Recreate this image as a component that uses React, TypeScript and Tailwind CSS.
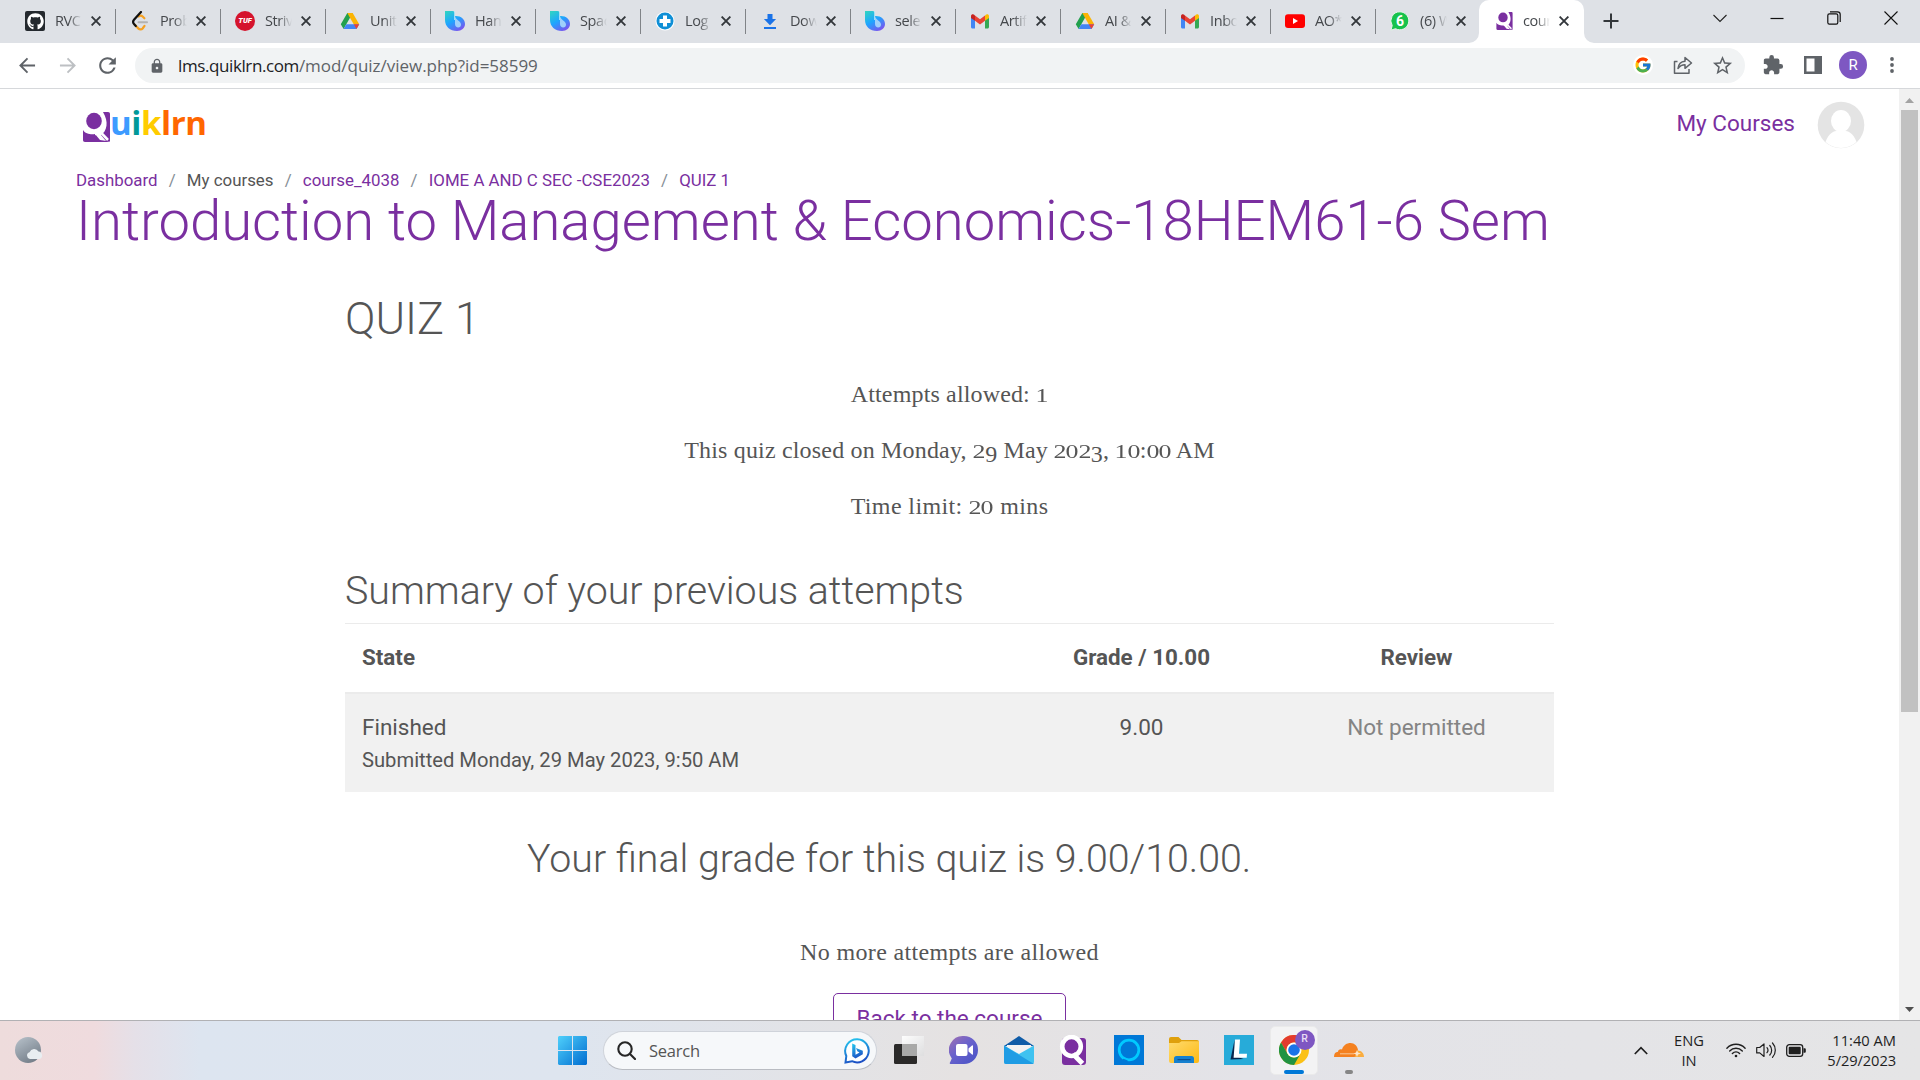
import React from "react";
import { FaGithub } from "react-icons/fa";
import { FcGoogle } from "react-icons/fc";
import { MdExtension, MdLock, MdRefresh, MdStarOutline } from "react-icons/md";

type Svg = { className?: string };

/* ---------- favicons ---------- */

const GithubIcon = () => (
  <span className="flex h-5 w-5 items-center justify-center rounded-[2px] bg-[#24292e] text-white">
    <FaGithub size={17} />
  </span>
);

const LeetcodeIcon = () => (
  <svg viewBox="0 0 20 20" className="h-5 w-5" fill="none" strokeWidth="2.2" strokeLinecap="round">
    <path d="M14.5 14.8 12.6 17.5c-1 1.2-3 1.2-4.1.1L4.6 13.600" stroke="#f5a123" />
    <path d="M14.4 7.300 12.600 5.500c-1-1-2.800-1-3.900 0" stroke="#f5a123" />
    <path d="M11 1 4.200 8.600c-1.300 1.500-1.300 3.400 0 4.700l1.600 1.700" stroke="#111" />
    <path d="M8.500 11.300H17" stroke="#b3b3b3" strokeWidth="2" />
  </svg>
);

const TufIcon = () => (
  <span className="flex h-5 w-5 items-center justify-center rounded-full bg-[#d5142d] font-['Roboto',sans-serif] text-[7.5px] font-black italic leading-none text-white">
    TUF
  </span>
);

const DriveIcon = () => (
  <svg viewBox="0 0 20 20" className="h-5 w-5">
    <path d="M7.300 2h5.400L6.300 13.200 3.600 18 .8 13.200z" fill="#22a04d" />
    <path d="M7.300 2h5.400l6.500 11.200h-5.500z" fill="#fbb404" />
    <path d="M6.400 13.200h12.800L16.500 18h-13z" fill="#4285f4" />
    <path d="m13.700 13.200h5.500L16.500 18z" fill="#ea4335" />
  </svg>
);

const BingChatIcon = () => (
  <svg viewBox="0 0 20 20" className="h-5 w-5">
    <defs>
      <linearGradient id="bc" x1="0.1" y1="0" x2="0.7" y2="1">
        <stop offset="0" stopColor="#2fd3c4" />
        <stop offset="0.5" stopColor="#1ea5ff" />
        <stop offset="1" stopColor="#7a55ee" />
      </linearGradient>
    </defs>
    <path d="M0 0h7.500c1.700 0 2.500.9 2.500 2.500V5c5.500-.5 10 3 10 8 0 4-3.500 7-8 7C5 20 0 15.500 0 9z" fill="url(#bc)" />
    <path d="M10 5v8c0 2 1.500 3.500 3.200 3.500S16 15.200 16 13.500C16 10 10.500 9 10 5z" fill="#9fd0fb" />
    <path d="M9.500 0v9" stroke="#bfe9fa" strokeWidth=".8" />
  </svg>
);

const PlusCircleIcon = () => (
  <svg viewBox="0 0 20 20" className="h-5 w-5">
    <circle cx="10" cy="10" r="9.500" fill="#fff" />
    <circle cx="10" cy="10" r="8.500" fill="#0f8fd6" />
    <path d="M8 4.500h4V8h3.500v4H12v3.500H8V12H4.500V8H8z" fill="#fff" />
  </svg>
);

const DownloadIcon = () => (
  <svg viewBox="0 0 20 20" className="h-5 w-5" fill="#1a73e8">
    <path d="M7.500 3h5v5h3.600L10 14.300 3.900 8h3.600zM4 16h12v2H4z" />
  </svg>
);

const GmailIcon = () => (
  <svg viewBox="0 0 20 20" className="h-5 w-5">
    <path d="M1 6v10c0 .9.600 1.500 1.500 1.500H5V8z" fill="#4285f4" />
    <path d="M19 6v10c0 .9-.6 1.500-1.500 1.500H15V8z" fill="#34a853" />
    <path d="M5 4.500 10 8.300l5-3.800v5.300L10 13.600 5 9.800z" fill="#ea4335" />
    <path d="M1 5.200C1 3.200 3.200 2.800 4.500 3.900L5 4.500v5.300L1 6.900z" fill="#c5221f" />
    <path d="M19 5.200c0-2-2.200-2.400-3.500-1.300l-.5.600v5.300l4-2.900z" fill="#fbbc04" />
  </svg>
);

const YoutubeIcon = () => (
  <svg viewBox="0 0 20 20" className="h-5 w-5">
    <rect x="0" y="3.300" width="20" height="13.600" rx="3" fill="#f00" />
    <path d="M8 7v6l5-3z" fill="#fff" />
  </svg>
);

const WhatsappIcon = () => (
  <span className="relative flex h-5 w-5 items-center justify-center">
    <svg viewBox="0 0 20 20" className="absolute inset-0 h-5 w-5">
      <path d="M10 .8a9 9 0 1 1-4.500 16.900L1 19.200l1.200-4.700A9 9 0 0 1 10 .8z" fill="#17c24b" stroke="#e9f5ec" strokeWidth="1" />
    </svg>
    <span className="relative font-['Roboto',sans-serif] text-[14px] font-bold leading-none text-white">6</span>
  </span>
);

const QLogo = ({ className }: Svg) => (
  <svg viewBox="0 0 27 30" className={className}>
    <path d="M0 18c2 4 9 5 12 4l5 6 10 1.500V30H2c-1.300 0-2-.8-2-2z" fill="#7a2fa0" />
    <path d="M20 0h5c1.400 0 2 .7 2 2v27h-4l-5-6c6-4 8-13 2-23z" fill="#7a2fa0" />
    <ellipse cx="11" cy="9" rx="7.800" ry="8.200" fill="#7a2fa0" />
    <path d="M12 22c2.500 0 4-1 5.500-1.800L25 28" stroke="#fff" strokeWidth="2.600" fill="none" />
  </svg>
);

/* ---------- browser chrome ---------- */

const CloseX = () => (
  <svg viewBox="0 0 10 10" className="h-[10px] w-[10px] shrink-0" stroke="#33373b" strokeWidth="1.900">
    <path d="M.6.600l8.800 8.800M9.400.600.600 9.400" />
  </svg>
);

const tabs: { icon: React.ReactNode; label: string }[] = [
  { icon: <GithubIcon />, label: "RVC" },
  { icon: <LeetcodeIcon />, label: "Prob" },
  { icon: <TufIcon />, label: "Striv" },
  { icon: <DriveIcon />, label: "Unit" },
  { icon: <BingChatIcon />, label: "Han" },
  { icon: <BingChatIcon />, label: "Spac" },
  { icon: <PlusCircleIcon />, label: "Log" },
  { icon: <DownloadIcon />, label: "Dow" },
  { icon: <BingChatIcon />, label: "sele" },
  { icon: <GmailIcon />, label: "Artif" },
  { icon: <DriveIcon />, label: "AI &" },
  { icon: <GmailIcon />, label: "Inbo" },
  { icon: <YoutubeIcon />, label: "AO*" },
  { icon: <WhatsappIcon />, label: "(6) W" },
];

const TabLabel = ({ children }: { children: React.ReactNode }) => (
  <span className="ml-[10px] w-[27px] overflow-hidden whitespace-nowrap text-[14.500px] leading-5 tracking-[-0.4px] text-[#45484c] [mask-image:linear-gradient(to_right,#000_50%,transparent)]">
    {children}
  </span>
);

const TabStrip = () => (
  <div className="flex h-[43px] bg-[#dee1e6] pl-[11px]">
    {tabs.map((t, i) => (
      <div key={i} className="flex h-[42px] w-[105px] shrink-0 items-center">
        <div className="flex h-[25px] w-full items-center pl-[14px]">
          {t.icon}
          <TabLabel>{t.label}</TabLabel>
          <span className="ml-[9px] flex">
            <CloseX />
          </span>
          {i < tabs.length - 1 && <span className="ml-auto h-[25px] w-px bg-[#808387]" />}
        </div>
      </div>
    ))}
    <div className="relative -ml-[2px] flex h-[43px] w-[105px] shrink-0 items-center rounded-t-[10px] bg-white pb-px pl-[17px]">
      <svg viewBox="0 0 10 10" className="absolute -left-[10px] bottom-0 h-[10px] w-[10px]" fill="#fff">
        <path d="M10 0v10H0A10 10 0 0 0 10 0z" />
      </svg>
      <svg viewBox="0 0 10 10" className="absolute -right-[10px] bottom-0 h-[10px] w-[10px]" fill="#fff">
        <path d="M0 0v10h10A10 10 0 0 1 0 0z" />
      </svg>
      <QLogo className="h-[18px] w-[17px]" />
      <TabLabel>cour</TabLabel>
      <span className="ml-[9px] flex">
        <CloseX />
      </span>
    </div>
    <div className="ml-[19px] flex items-center pb-px">
      <svg viewBox="0 0 16 16" className="h-4 w-4" stroke="#33373b" strokeWidth="2">
        <path d="M8 .5v15M.5 8h15" />
      </svg>
    </div>
    <div className="ml-auto flex h-[36px] items-center gap-[43px] pr-[22px]">
      <svg viewBox="0 0 14 14" className="h-[14px] w-[14px]" fill="none" stroke="#222" strokeWidth="1.100">
        <path d="m.5 4 6.500 6.500L13.500 4" />
      </svg>
      <svg viewBox="0 0 14 14" className="h-[14px] w-[14px]" stroke="#111" strokeWidth="1.200">
        <path d="M.5 7.500h13" />
      </svg>
      <svg viewBox="0 0 14 14" className="h-[14px] w-[14px]" fill="none" stroke="#111" strokeWidth="1.200">
        <rect x=".8" y="2.800" width="10" height="10.400" rx="1.600" />
        <path d="M3 .8h7.500a2.700 2.700 0 0 1 2.700 2.700V11" />
      </svg>
      <svg viewBox="0 0 14 14" className="h-[14px] w-[14px]" stroke="#111" strokeWidth="1.100">
        <path d="m.5.500 13 13M13.500.500l-13 13" />
      </svg>
    </div>
  </div>
);

const Arrow = ({ className }: Svg) => (
  <svg viewBox="0 0 18 18" className={className} fill="none" stroke="currentColor" strokeWidth="2">
    <path d="M17 9H2.500M9 1.500 1.500 9 9 16.500" />
  </svg>
);

const Toolbar = () => (
  <div className="flex h-[46px] items-center border-b border-[#d6d8db] bg-white pb-px text-[#5f6368]">
    <Arrow className="ml-[19px] h-[17px] w-[17px]" />
    <Arrow className="ml-[23px] h-[17px] w-[17px] rotate-180 text-[#bdc0c3]" />
    <MdRefresh className="ml-[19px]" size={25} />
    <div className="ml-[15px] flex h-[35px] w-[1610px] items-center rounded-full bg-[#f1f3f4] pl-[14px]">
      <MdLock className="mt-px" size={16} />
      <div className="ml-[13px] mt-px whitespace-nowrap text-[17px] leading-6">
        <span className="tracking-[-0.4px] text-[#202124]">lms.quiklrn.com</span>
        <span className="tracking-[-0.030px]">/mod/quiz/view.php?id=58599</span>
      </div>
      <div className="ml-auto flex items-center">
        <span className="flex h-5 w-5 items-center justify-center rounded-full bg-white">
          <FcGoogle size={18} />
        </span>
        <svg viewBox="0 0 20 20" className="ml-[20px] h-5 w-5" fill="none" stroke="#5f6368" strokeWidth="1.500" strokeLinejoin="round">
          <path d="M4.500 6.500H1.500v11.700h14.500V14" />
          <path d="M5 13.500c.5-4.500 3-7 7-7.300V2.500L18.500 8 12 13.300V9.800c-3 0-5 1-7 3.700z" />
        </svg>
        <MdStarOutline className="ml-[18px] mr-[11px]" size={23} />
      </div>
    </div>
    <MdExtension className="ml-[17px]" size={22} />
    <svg viewBox="0 0 18 18" className="ml-[20px] h-[18px] w-[18px]">
      <path d="M0 0h18v18H0zM2.500 2.500v13h8v-13z" fill="#5f6368" fillRule="evenodd" />
    </svg>
    <span className="ml-[17px] flex h-[28px] w-[28px] items-center justify-center rounded-full bg-[#7e57c2] font-['Roboto',sans-serif] text-[15px] leading-none text-white">
      R
    </span>
    <svg viewBox="0 0 4 18" className="ml-[23px] h-[18px] w-[4px]" fill="#5f6368">
      <circle cx="2" cy="3" r="1.900" />
      <circle cx="2" cy="9" r="1.900" />
      <circle cx="2" cy="15" r="1.900" />
    </svg>
  </div>
);

/* ---------- page ---------- */

/* Renders digits as text figures: 0-2 at x-height, 3-9 dropped below the baseline. */
const TextFigures = ({ children }: { children: string }) => (
  <>
    {children.split(/(\d)/).map((c, i) => {
      if (/^[012]$/.test(c))
        return (
          <span key={i} className="inline-block origin-[50%_79%] scale-x-[1.08] scale-y-[0.75]">
            {c}
          </span>
        );
      if (/^\d$/.test(c))
        return (
          <span key={i} className="inline-block translate-y-[4px]">
            {c}
          </span>
        );
      return c;
    })}
  </>
);

const crumbs = [
  { label: "Dashboard", link: true },
  { label: "My courses", link: false },
  { label: "course_4038", link: true },
  { label: "IOME A AND C SEC -CSE2023", link: true },
  { label: "QUIZ 1", link: true },
];

const Page = () => (
  <main className="h-[931px] w-[1899px] shrink-0 overflow-hidden bg-white font-['Roboto',sans-serif] text-[#555]">
    <header className="flex h-[80px] justify-between pl-[83px] pr-[34px]">
      <div className="flex">
        <QLogo className="mt-[23px] h-[30px] w-[27px]" />
        <div className="mt-[14px] font-['Open_Sans',sans-serif] text-[33px] font-bold leading-[40px] tracking-[-0.4px]">
          <span className="text-[#3d9bff]">u</span>
          <span className="text-[#009999]">i</span>
          <span className="text-[#ffcc00]">k</span>
          <span className="text-[#ff6600]">lrn</span>
        </div>
      </div>
      <div className="flex h-[71px] items-center">
        <span className="mb-[4px] text-[22.500px] leading-7 text-[#7a2fa0]">My Courses</span>
        <svg viewBox="0 0 48 48" className="ml-[22px] h-[48px] w-[48px]">
          <defs>
            <clipPath id="av">
              <circle cx="24" cy="24" r="23" />
            </clipPath>
          </defs>
          <circle cx="24" cy="24" r="23.300" fill="#e4e4e4" />
          <g clipPath="url(#av)" fill="#fff">
            <ellipse cx="24" cy="20" rx="10" ry="11" />
            <path d="M7 48c1-10 6-17 12-18h10c6 1 11 8 12 18z" />
          </g>
        </svg>
      </div>
    </header>

    <nav className="flex h-[24px] items-center whitespace-nowrap pl-[76px] text-[16.875px]">
      {crumbs.map((c, i) => (
        <React.Fragment key={c.label}>
          {i > 0 && <span className="w-[29.300px] text-center text-[#868e96]">/</span>}
          <span className={c.link ? "text-[#7a2fa0]" : "text-[#555]"}>{c.label}</span>
        </React.Fragment>
      ))}
    </nav>
    <h1 className="whitespace-nowrap pl-[76px] text-[56.250px] font-light leading-[56px] tracking-[-0.010px] text-[#7a2fa0]">
      Introduction to Management &amp; Economics-18HEM61-6 Sem
    </h1>

    <section className="ml-[345px] flex w-[1209px] flex-col">
      <h2 className="mt-[42px] text-[45px] font-light leading-[56px]">QUIZ 1</h2>

      <div className="mt-[33px] flex flex-col gap-[28px] text-center font-['Liberation_Serif',serif] text-[24px] leading-[28px]">
        <p className="tracking-[0.150px]">
          <TextFigures>Attempts allowed: 1</TextFigures>
        </p>
        <p className="tracking-[0.180px]">
          <TextFigures>This quiz closed on Monday, 29 May 2023, 10:00 AM</TextFigures>
        </p>
        <p className="tracking-[0.380px]">
          <TextFigures>Time limit: 20 mins</TextFigures>
        </p>
      </div>

      <h3 className="mt-[47px] text-[39.375px] font-light leading-[48px] tracking-[-0.020px]">
        Summary of your previous attempts
      </h3>

      <div className="mt-[8px]">
        <div className="grid h-[69px] grid-cols-[659px_275px_275px] items-center border-t border-[#ebebeb] pb-px text-[22.400px] font-bold">
          <span className="pl-[17px]">State</span>
          <span className="text-center">Grade / 10.00</span>
          <span className="text-center">Review</span>
        </div>
        <div className="grid h-[100px] grid-cols-[659px_275px_275px] border-t-2 border-[#ebebeb] bg-[#f1f1f1] pt-[16px] text-[22.500px] leading-[35px]">
          <div className="flex flex-col pl-[17px]">
            <span>Finished</span>
            <span className="text-[20.200px] leading-[31px]">Submitted Monday, 29 May 2023, 9:50 AM</span>
          </div>
          <span className="text-center">9.00</span>
          <span className="text-center text-[#848484]">Not permitted</span>
        </div>
      </div>

      <h3 className="mt-[43px] pl-[182px] text-[39.300px] font-light leading-[48px]">
        Your final grade for this quiz is 9.00/10.00.
      </h3>
      <p className="mt-[55px] text-center font-['Liberation_Serif',serif] text-[24px] leading-[28px] tracking-[0.340px]">
        No more attempts are allowed
      </p>
      <button className="mt-[27px] flex h-[51px] w-[233px] items-center justify-center self-center rounded-[5px] border border-[#7a2fa0] text-[22.500px] text-[#7a2fa0]">
        Back to the course
      </button>
    </section>
  </main>
);

const ScrollBar = () => (
  <div className="flex h-[931px] w-[21px] flex-col items-center justify-between bg-[#f1f1f1]">
    <div className="flex flex-col items-center">
      <svg viewBox="0 0 9 5" className="mt-[9px] h-[5px] w-[9px]" fill="#a3a3a3">
        <path d="M0 5 4.500 0 9 5z" />
      </svg>
      <div className="mt-[7px] h-[602px] w-[17px] bg-[#c1c1c1]" />
    </div>
    <svg viewBox="0 0 9 5" className="mb-[8px] h-[5px] w-[9px]" fill="#505050">
      <path d="M0 0 4.500 5 9 0z" />
    </svg>
  </div>
);

/* ---------- taskbar ---------- */

const WindowsIcon = () => (
  <svg viewBox="0 0 29 29" className="h-[29px] w-[29px]">
    <defs>
      <linearGradient id="win" gradientUnits="userSpaceOnUse" x1="0" y1="0" x2="29" y2="29">
        <stop offset="0" stopColor="#4fd0fb" />
        <stop offset="1" stopColor="#006cd0" />
      </linearGradient>
    </defs>
    <path d="M1 0h13v14H0V1zM15 0h13l1 1v13H15zM0 15h14v14H1l-1-1zM15 15h14v13l-1 1H15z" fill="url(#win)" />
  </svg>
);

const BingIcon = () => (
  <svg viewBox="0 0 26 26" className="h-[26px] w-[26px]">
    <defs>
      <linearGradient id="bing" x1="0.2" y1="0" x2="0.5" y2="1">
        <stop offset="0" stopColor="#25c4ee" />
        <stop offset="1" stopColor="#1c4fc4" />
      </linearGradient>
    </defs>
    <path d="M13.500 1.200A11.600 11.600 0 1 1 8 23.200L1.500 24.600 2.300 18A11.800 11.800 0 0 1 13.500 1.200z" fill="#fff" stroke="url(#bing)" strokeWidth="2" />
    <path d="M8.200 5.500 11.500 7v9.800l4-2.300-2.200-1.200-1.300-3.300 6.800 2.700v3.600L11.500 20.500l-3.300-2.200z" fill="url(#bing)" />
  </svg>
);

const TaskViewIcon = () => (
  <svg viewBox="0 0 30 30" className="h-[30px] w-[30px]">
    <defs>
      <linearGradient id="tv" x1="0" y1="0" x2="1" y2="1">
        <stop offset="0" stopColor="#fdfdfd" />
        <stop offset="1" stopColor="#dededf" />
      </linearGradient>
    </defs>
    <rect x="0" y="9" width="23" height="20" rx="1.500" fill="#2b2a29" />
    <path d="M8 1h22v20H8z" fill="url(#tv)" />
    <path d="M8 9h15v12H8z" fill="#a9a9a8" />
  </svg>
);

const ChatIcon = () => (
  <svg viewBox="0 0 30 30" className="h-[30px] w-[30px]">
    <defs>
      <linearGradient id="chat" x1="0" y1="0.1" x2="0.7" y2="0.9">
        <stop offset="0" stopColor="#9c6fb4" />
        <stop offset="0.5" stopColor="#6a62cc" />
        <stop offset="1" stopColor="#5257c8" />
      </linearGradient>
    </defs>
    <path d="M15 1a14 14 0 1 1 0 28H1.500c-.8 0-1-.8-.5-1.400l1.800-4.200A14 14 0 0 1 15 1z" fill="url(#chat)" />
    <rect x="7" y="9" width="11.500" height="12" rx="2" fill="#fff" />
    <path d="m19.500 13.500 3.500-3c.500-.4 1-.1 1 .500v8c0 .6-.5.900-1 .500l-3.500-3z" fill="#fff" />
  </svg>
);

const MailIcon = () => (
  <svg viewBox="0 0 30 30" className="h-[30px] w-[30px]">
    <path d="M0 11 15 1l15 10z" fill="#0f5ca8" />
    <path d="M3 10h24v8L15 24 3 18z" fill="#f2f2f3" />
    <path d="M0 10.500 15 19l15-8.500V27a2 2 0 0 1-2 2H2a2 2 0 0 1-2-2z" fill="#3fc2f0" />
    <path d="M0 10.500 30 29H2a2 2 0 0 1-2-2z" fill="#1f9ce4" />
  </svg>
);

const QuikApp = () => (
  <span className="relative block h-[30px] w-[30px]">
    <span className="absolute left-[3px] top-[3px] h-[27px] w-[24px] rounded-[3px] bg-[#7a2fa0]" />
    <svg viewBox="0 0 30 30" className="absolute inset-0 h-[30px] w-[30px]" fill="none" stroke="#fff">
      <ellipse cx="12.500" cy="11.500" rx="9.300" ry="9.500" strokeWidth="4.600" />
      <path d="m14 19 9.500 9.500" strokeWidth="5" />
    </svg>
  </span>
);

const AlexaIcon = () => (
  <svg viewBox="0 0 30 30" className="h-[30px] w-[30px]">
    <path d="M0 0h30v30H0z" fill="#0078d7" />
    <circle cx="15" cy="15" r="9.800" fill="none" stroke="#00caff" strokeWidth="2.700" />
    <path d="M11 22.500c1.500.800 2.500 1 3.500 3.500l-5-1.500z" fill="#00caff" />
    <path d="M9 24.500 13.500 26.300" stroke="#0078d7" strokeWidth="1.500" />
  </svg>
);

const FolderIcon = () => (
  <svg viewBox="0 0 30 30" className="h-[30px] w-[30px]">
    <defs>
      <linearGradient id="fold" x1="0" y1="0" x2="1" y2="1">
        <stop offset="0" stopColor="#ffdb6e" />
        <stop offset="1" stopColor="#fdb913" />
      </linearGradient>
    </defs>
    <path d="M0 4a2 2 0 0 1 2-2h7.500l3 3H28a2 2 0 0 1 2 2v4H0z" fill="#dfa00c" />
    <path d="M0 8h10l2.500-1.800H30V26a2 2 0 0 1-2 2H2a2 2 0 0 1-2-2z" fill="url(#fold)" />
    <path d="M5 28v-4.500a2.500 2.500 0 0 1 2.500-2.500h15a2.500 2.500 0 0 1 2.500 2.500V28z" fill="#1580cf" />
    <path d="M8.500 24.600h13" stroke="#0d4f8f" strokeWidth="1.200" />
  </svg>
);

const LApp = () => (
  <svg viewBox="0 0 30 30" className="h-[30px] w-[30px]">
    <path d="M0 0h30v30H0z" fill="#27abd9" />
    <path d="M10.500 5 6.500 24.500l13-.5L11.500 21z" fill="#08284f" />
    <path d="M11 4.500h5l-1 14.200h8l-.3 4.100H9.600z" fill="#fff" />
  </svg>
);

const ChromeIcon = () => (
  <svg viewBox="0 0 30 30" className="h-[30px] w-[30px]">
    <circle cx="15" cy="15" r="15" fill="#fbc116" />
    <path d="M2 7.500A15 15 0 0 1 28 7.500H15a7.500 7.500 0 0 0-6.500 11.200z" fill="#e33b2e" />
    <path d="M2 7.500A15 15 0 0 0 15 30l6.500-11.300a7.500 7.500 0 0 1-13 0z" fill="#229342" />
    <circle cx="15" cy="15" r="7.500" fill="#fff" />
    <circle cx="15" cy="15" r="5.800" fill="#1a73e8" />
  </svg>
);

const CloudflareIcon = () => (
  <svg viewBox="0 0 30 30" className="h-[30px] w-[30px]">
    <path d="M0 22c0-3.500 1.500-5 4-5.200 0-2 2-3.200 4-2.400C9.500 10 13 8 16.500 8c4 0 7 3 7.500 7l-2 7z" fill="#f48120" />
    <path d="M20.500 22 23 15.500c4-.5 7 2.500 7 6.500z" fill="#faad3f" />
    <path d="M6 18.800h14" stroke="#fbd0a5" strokeWidth=".9" />
    <path d="m23 15 1 2.500 3 1-3 1L23 22l-1-2.500-2.500-1 2.500-1z" fill="#fde6cc" />
  </svg>
);

const apps = [
  <TaskViewIcon />,
  <ChatIcon />,
  <MailIcon />,
  <QuikApp />,
  <AlexaIcon />,
  <FolderIcon />,
  <LApp />,
];

const Taskbar = () => (
  <footer className="flex h-[60px] w-[1920px] border-t border-[#b1b1b4] bg-[linear-gradient(90deg,#eedcdc_0px,#efdbde_95px,#e5e0e8_135px,#dde5f0_200px,#dee5ef_560px,#e5e2e2_960px,#e3e3e8_1250px,#e5e5e6_1920px)] text-[#1f1f1f]">
    <div className="flex w-[558px] items-center pb-px pl-[15px]">
      <svg viewBox="0 0 28 26" className="h-[26px] w-[28px]">
        <defs>
          <linearGradient id="moon" x1="0.2" y1="0" x2="0.8" y2="1">
            <stop offset="0" stopColor="#b3bdc6" />
            <stop offset="1" stopColor="#707a85" />
          </linearGradient>
        </defs>
        <circle cx="13" cy="13" r="13" fill="url(#moon)" />
        <path d="M15 22a3.500 3.500 0 0 1-.5-6.800 5 5 0 0 1 9-.6A3.800 3.800 0 0 1 24.500 22z" fill="#e9eef1" />
      </svg>
    </div>
    <div className="flex items-center">
      <WindowsIcon />
    </div>
    <div className="ml-[16px] flex items-center">
      <div className="flex h-[39px] w-[274px] items-center rounded-full border border-[#cfd3da] border-b-[#b9bcc2] bg-[#f6f8fa] pl-[13px] pr-[6px]">
        <svg viewBox="0 0 19 19" className="h-[19px] w-[19px]" fill="none" stroke="#262626" strokeWidth="2.100" strokeLinecap="round">
          <circle cx="8" cy="8" r="6.700" />
          <path d="m13 13 5 5" />
        </svg>
        <span className="ml-[13px] text-[16.500px] leading-5 tracking-[-0.250px] text-[#555]">Search</span>
        <span className="ml-auto">
          <BingIcon />
        </span>
      </div>
    </div>
    <div className="ml-[4px] flex pb-px">
      {apps.map((a, i) => (
        <div key={i} className="flex w-[55px] items-center justify-center">
          {a}
        </div>
      ))}
      <div className="flex w-[55px] items-center justify-center">
        <div className="relative flex h-[49px] w-[48px] items-center justify-center rounded-[5px] border border-[#eaeaea] bg-[#f3f3f4]">
          <ChromeIcon />
          <span className="absolute right-[2px] top-[3px] flex h-[20px] w-[20px] items-center justify-center rounded-full bg-[#7e57c2] font-['Roboto',sans-serif] text-[10.500px] font-medium leading-none text-[#e8def5]">
            R
          </span>
          <span className="absolute bottom-0 left-[13px] h-[4px] w-[20px] rounded-full bg-[#0078d7]" />
        </div>
      </div>
      <div className="relative flex w-[55px] items-center justify-center">
        <CloudflareIcon />
        <span className="absolute bottom-[5px] left-[24px] h-[4px] w-[8px] rounded-full bg-[#868686]" />
      </div>
    </div>
    <div className="ml-auto flex items-center pb-px pr-[24px] text-[14.700px] leading-[20px]">
      <svg viewBox="0 0 14 9" className="h-[9px] w-[14px]" fill="none" stroke="#1f1f1f" strokeWidth="1.700">
        <path d="m.8 8 6.200-6.300L13.200 8" />
      </svg>
      <div className="ml-[26px] w-[30px] text-center">
        <div>ENG</div>
        <div>IN</div>
      </div>
      <svg viewBox="0 0 20 16" className="ml-[22px] h-[16px] w-[20px]" fill="none" stroke="#1f1f1f" strokeWidth="1.400" strokeLinecap="round">
        <path d="M.9 6.200a12.600 12.600 0 0 1 18.200 0M3.700 8.900a8.800 8.800 0 0 1 12.600 0M6.400 11.500a5.200 5.200 0 0 1 7.200 0" />
        <circle cx="10" cy="14" r="1.300" fill="#1f1f1f" stroke="none" />
      </svg>
      <svg viewBox="0 0 20 16" className="ml-[10px] h-[16px] w-[20px]" fill="none" stroke="#1f1f1f" strokeWidth="1.200" strokeLinecap="round" strokeLinejoin="round">
        <path d="M.7 5.500h3L8 2v12.500l-4.300-3.600h-3z" />
        <path d="M11 5.700a4 4 0 0 1 0 5M13.800 3.500a7 7 0 0 1 0 9.500M16.500 1a10.500 10.500 0 0 1 0 14.300" />
      </svg>
      <svg viewBox="0 0 20 13" className="ml-[10px] h-[13px] w-[20px]">
        <rect x=".7" y=".7" width="16" height="11.600" rx="2.600" fill="none" stroke="#1f1f1f" strokeWidth="1.300" />
        <rect x="2.700" y="2.700" width="12" height="7.600" rx="1" fill="#1f1f1f" />
        <path d="M17.500 4.300h1c.8 0 1.300.5 1.300 1.300v1.800c0 .8-.5 1.300-1.300 1.300h-1z" fill="#1f1f1f" />
      </svg>
      <div className="ml-[20px] w-[70px] pb-px text-right">
        <div>11:40 AM</div>
        <div className="tracking-[-0.100px]">5/29/2023</div>
      </div>
    </div>
  </footer>
);

export default function App() {
  return (
    <div className="flex h-[1080px] w-[1920px] flex-col overflow-hidden bg-white font-['Open_Sans','Noto_Sans',sans-serif]">
      <TabStrip />
      <Toolbar />
      <div className="flex h-[931px]">
        <Page />
        <ScrollBar />
      </div>
      <Taskbar />
    </div>
  );
}
